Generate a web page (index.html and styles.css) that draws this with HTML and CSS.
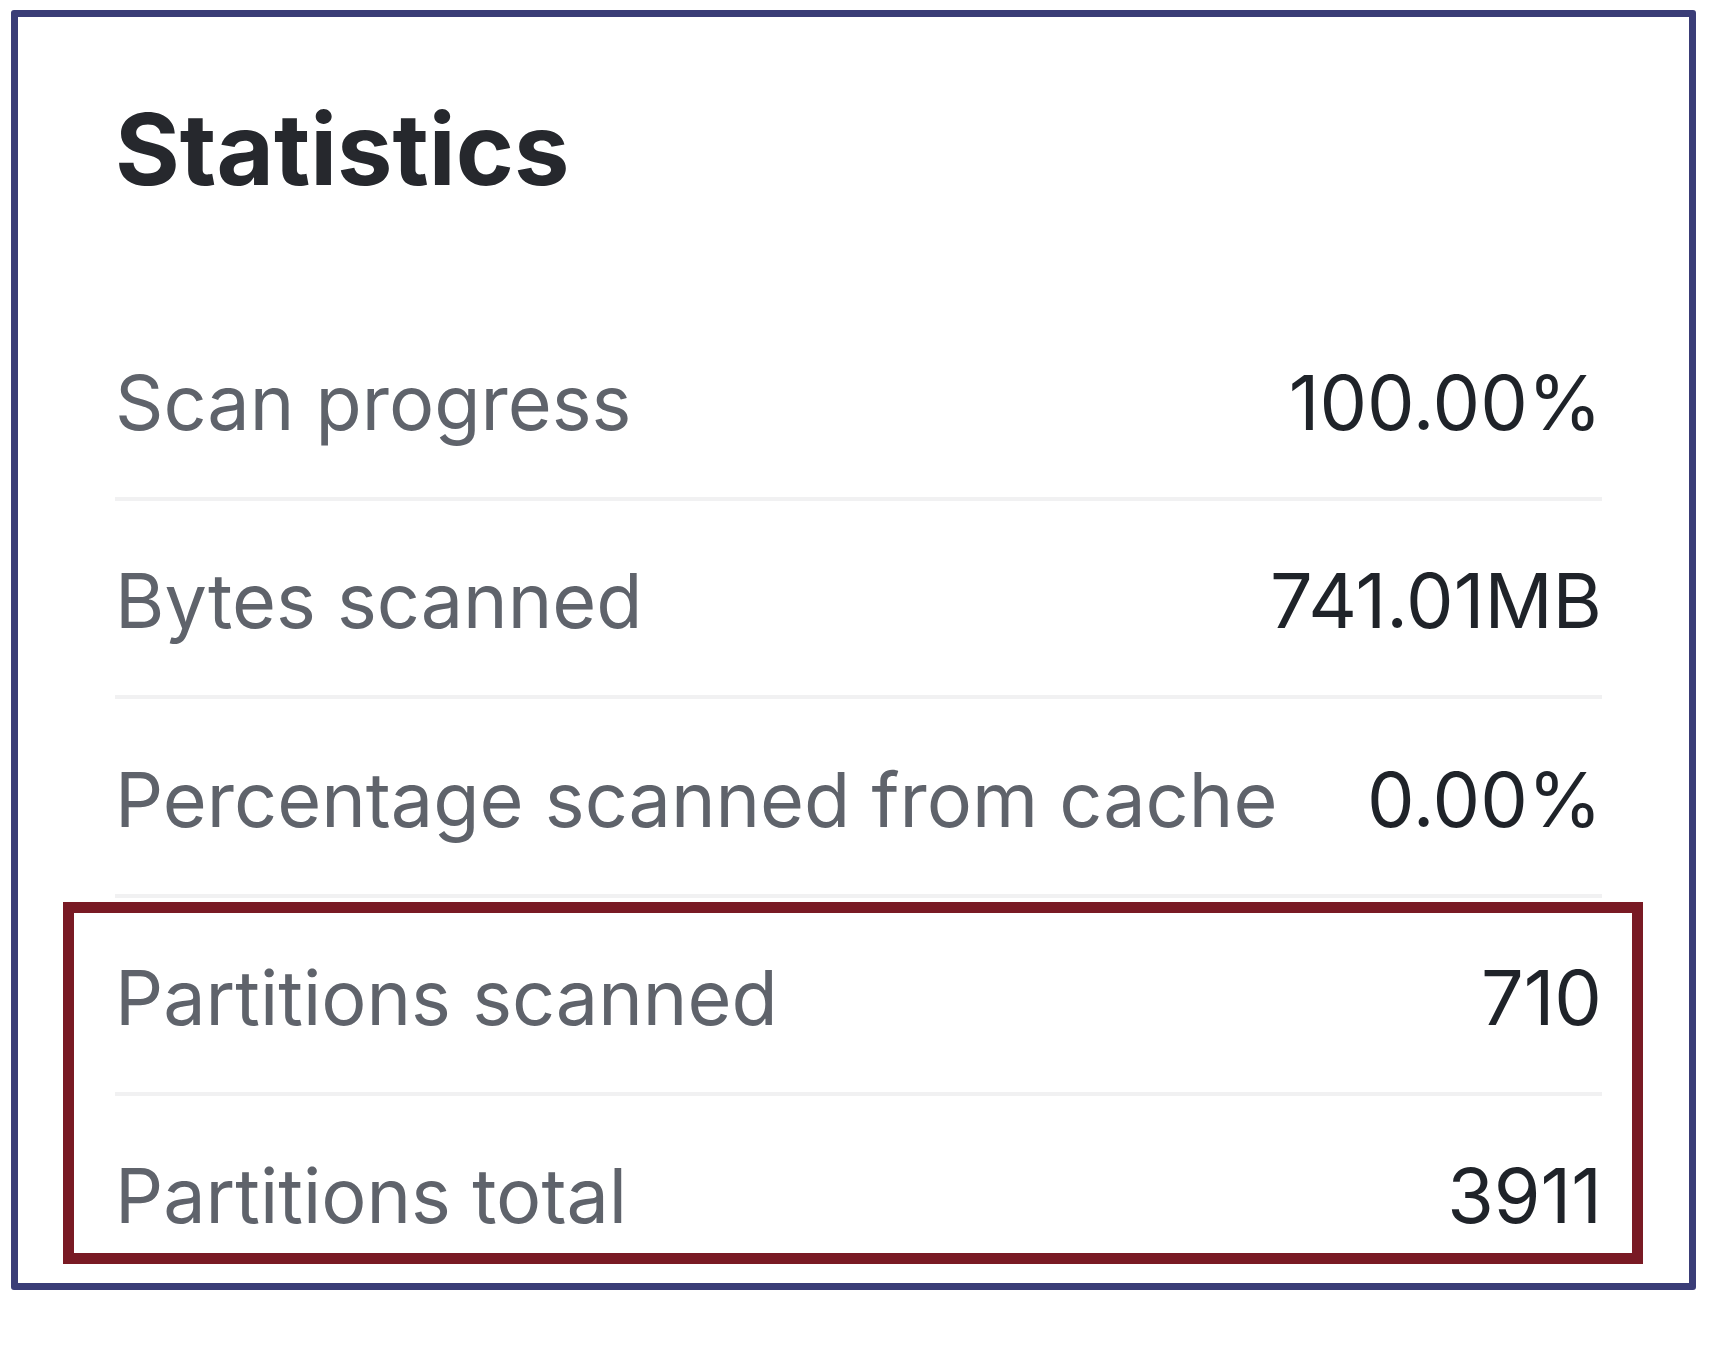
FILE: index.html
```html
<!DOCTYPE html>
<html lang="en">
<head>
<meta charset="utf-8">
<title>Statistics</title>
<link rel="stylesheet" href="styles.css">
</head>
<body>
<section class="card">
  <h2 class="title">Statistics</h2>
  <div class="rows">
    <div class="row"><span class="label">Scan progress</span><span class="value">100.00%</span></div>
    <div class="row"><span class="label">Bytes scanned</span><span class="value">741.01MB</span></div>
    <div class="row"><span class="label">Percentage scanned from cache</span><span class="value">0.00%</span></div>
    <div class="highlight">
      <div class="row"><span class="label">Partitions scanned</span><span class="value">710</span></div>
      <div class="row last"><span class="label">Partitions total</span><span class="value">3911</span></div>
    </div>
  </div>
</section>
</body>
</html>
```
FILE: styles.css
```css
html, body {
  margin: 0;
  padding: 0;
  background: #ffffff;
}

body {
  font-family: Inter, "Noto Sans", "Liberation Sans", sans-serif;
}

.card {
  box-sizing: border-box;
  width: 1685px;
  height: 1280px;
  margin: 10px 0 0 11px;
  border: 7px solid #3a3d77;
  border-radius: 3px;
  padding: 73px 87px 0 97px;
}

.title {
  margin: 0 0 94px;
  font-size: 99px;
  font-weight: 700;
  line-height: 1.2;
  color: #26282d;
}

.rows {
  display: flex;
  flex-direction: column;
}

.row {
  display: flex;
  justify-content: space-between;
  align-items: baseline;
  padding: 55.4px 0 48.3px;
  border-bottom: 4px solid #f1f1f2;
  font-size: 75.5px;
  line-height: 1.2;
}

.row.last {
  border-bottom: none;
  padding-bottom: 40px;
}

.label {
  color: #5f636b;
}

.value {
  color: #1f2329;
}

.highlight {
  position: relative;
}

.highlight::after {
  content: "";
  position: absolute;
  top: 4px;
  left: -52px;
  right: -41px;
  bottom: 18px;
  border: 11px solid #791a24;
  pointer-events: none;
}
```
